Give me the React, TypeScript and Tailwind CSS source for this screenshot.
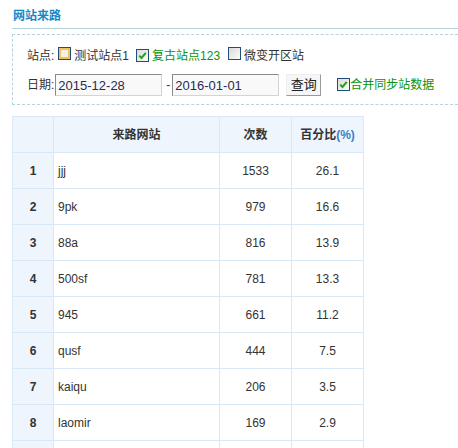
const rows = [
  { id: 1, site: "jjj", count: 1533, pct: "26.1" },
  { id: 2, site: "9pk", count: 979, pct: "16.6" },
  { id: 3, site: "88a", count: 816, pct: "13.9" },
  { id: 4, site: "500sf", count: 781, pct: "13.3" },
  { id: 5, site: "945", count: 661, pct: "11.2" },
  { id: 6, site: "qusf", count: 444, pct: "7.5" },
  { id: 7, site: "kaiqu", count: 206, pct: "3.5" },
  { id: 8, site: "laomir", count: 169, pct: "2.9" },
  { id: 9, site: "", count: "", pct: "" },
];

function Check({ checked, hover }: { checked?: boolean; hover?: boolean }) {
  return (
    <span
      className={
        "inline-flex w-[13px] h-[13px] shrink-0 items-center justify-center border border-[#1c4f7c] " +
        (hover ? "bg-[#f3f0e6] shadow-[inset_0_0_0_2px_#f5c15c]" : "bg-gradient-to-br from-[#dcdcd6] to-[#fbfbf8]")
      }
    >
      {checked && (
        <svg width="9" height="9" viewBox="0 0 9 9">
          <path d="M1.2 4.6 L3.5 7 L7.8 1.8" stroke="#1aa61a" strokeWidth="2" fill="none" />
        </svg>
      )}
    </span>
  );
}

export default function App() {
  return (
    <div
      className="w-[458px] h-[448px] overflow-hidden bg-white pl-3 text-[12px] text-[#333]"
      style={{ fontFamily: '"Liberation Sans", Arial, "Noto Sans CJK SC", sans-serif' }}
    >
      <div className="pt-[9px] pb-[4px] border-b border-[#b3d4df] mr-[-20px]">
        <div className="pl-px h-[15px] leading-[15px] font-bold text-[#1189c8]">网站来路</div>
      </div>
      <div className="mt-[5px] border border-dashed border-[#b5d3da] mr-[-20px] pl-[14px] pt-[13px] pb-[8px]">
        <div className="flex items-center h-[16px]">
          <span>站点:</span>
          <span className="ml-[4px]"><Check hover /></span>
          <span className="ml-[3px]">测试站点1</span>
          <span className="ml-[7px]"><Check checked /></span>
          <span className="ml-[3px] text-[#0a920a]">复古站点123</span>
          <span className="ml-[8px]"><Check /></span>
          <span className="ml-[3px]">微变开区站</span>
        </div>
        <div className="flex items-center mt-[10px] h-[22px]">
          <span>日期:</span>
          <input
            readOnly
            value="2015-12-28"
            className="ml-px w-[107px] h-[22px] px-[2px] text-[13px] text-[#2a2a55] bg-[#f9f9f9] border border-t-[#8a8a8a] border-l-[#8a8a8a] border-b-[#d4d4d4] border-r-[#d4d4d4] outline-none"
          />
          <span className="ml-[4px] mr-[2px]">-</span>
          <input
            readOnly
            value="2016-01-01"
            className="w-[107px] h-[22px] px-[2px] text-[13px] text-[#2a2a55] bg-[#f9f9f9] border border-t-[#8a8a8a] border-l-[#8a8a8a] border-b-[#d4d4d4] border-r-[#d4d4d4] outline-none"
          />
          <button className="ml-[7px] w-[35px] h-[22px] text-[13px] text-[#222] bg-[#f4f6f8] border border-t-[#eeeeee] border-l-[#eeeeee] border-b-[#9a9a9a] border-r-[#9a9a9a]">
            查询
          </button>
          <span className="ml-[16px]"><Check checked /></span>
          <span className="text-[12px] text-[#0a920a]">合并同步站数据</span>
        </div>
      </div>
      <table className="mt-[11px] border-collapse w-[351px] table-fixed">
        <colgroup>
          <col className="w-[41px]" />
          <col className="w-[166px]" />
          <col className="w-[72px]" />
          <col className="w-[72px]" />
        </colgroup>
        <thead>
          <tr className="h-[36px] bg-[#eef5fd]">
            <th className="border border-[#d8e8f7]"></th>
            <th className="border border-[#d8e8f7] font-bold">来路网站</th>
            <th className="border border-[#d8e8f7] font-bold">次数</th>
            <th className="border border-[#d8e8f7] font-bold">
              百分比<span className="text-[#3d7fc8]">(%)</span>
            </th>
          </tr>
        </thead>
        <tbody>
          {rows.map((r) => (
            <tr key={r.id} className="h-[36px]">
              <td className="border border-[#d8e8f7] bg-[#eef5fd] text-center font-bold">{r.site ? r.id : ""}</td>
              <td className="border border-[#d8e8f7] pl-[4px]">{r.site}</td>
              <td className="border border-[#d8e8f7] text-center">{r.count}</td>
              <td className="border border-[#d8e8f7] text-center">{r.pct}</td>
            </tr>
          ))}
        </tbody>
      </table>
    </div>
  );
}
